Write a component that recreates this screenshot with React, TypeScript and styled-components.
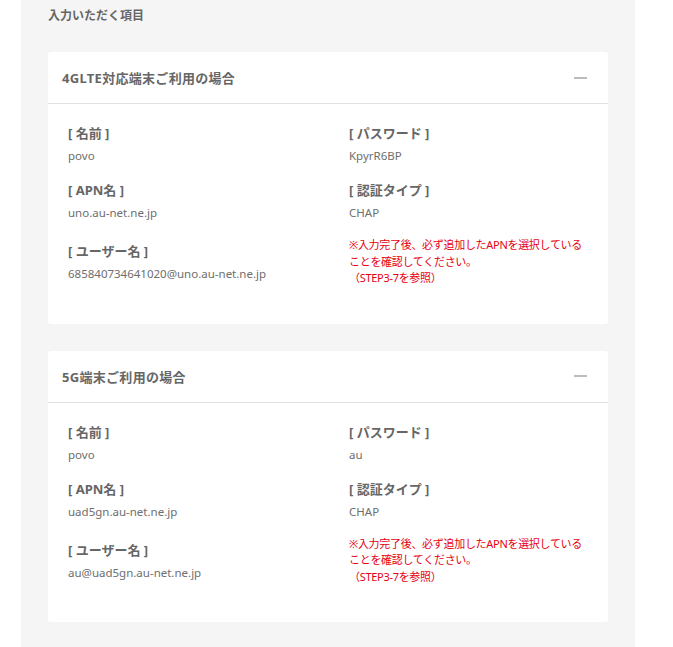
import React from "react";
import styled, { createGlobalStyle } from "styled-components";

const GlobalStyle = createGlobalStyle`
  html, body {
    margin: 0;
    padding: 0;
    background: #ffffff;
  }
  body {
    font-family: "Noto Sans", "Noto Sans CJK JP", sans-serif;
    color: #666666;
  }
`;

const Page = styled.div`
  padding: 0 38px 0 21px;
`;

const Panel = styled.section`
  background: #f5f5f5;
  padding: 7px 27px 40px 27px;
  min-height: 647px;
  box-sizing: border-box;
`;

const PanelTitle = styled.h2`
  margin: 0 0 27px 0;
  font-size: 12px;
  line-height: 18px;
  font-weight: 700;
  color: #666666;
`;

const CardList = styled.div`
  display: flex;
  flex-direction: column;
  gap: 27px;
`;

const Card = styled.article`
  background: #ffffff;
  border-radius: 3px;
`;

const CardHeader = styled.header`
  display: flex;
  align-items: center;
  justify-content: space-between;
  height: 51px;
  padding: 0 21px 0 14px;
  border-bottom: 1px solid #e2e2e2;
`;

const CardTitle = styled.h3`
  margin: 0;
  font-size: 13px;
  font-weight: 700;
  letter-spacing: 0.3px;
  color: #666666;
`;

const Minus = styled.span`
  display: block;
  width: 13px;
  height: 2px;
  background: #bcbcbc;
`;

const CardBody = styled.div`
  display: grid;
  grid-template-columns: 281px 1fr;
  padding: 19px 20px 37px 20px;
`;

const Column = styled.div`
  display: flex;
  flex-direction: column;
`;

const Field = styled.div<{ $top?: number }>`
  margin-top: ${(p) => (p.$top ?? 0)}px;
`;

const Label = styled.div`
  font-size: 13px;
  line-height: 20px;
  font-weight: 700;
  color: #666666;
  white-space: pre;
`;

const Value = styled.div`
  margin-top: 5px;
  font-size: 11.5px;
  line-height: 16px;
  color: #6e6e6e;
`;

const Note = styled.p<{ $top?: number }>`
  margin: ${(p) => (p.$top ?? 0)}px 0 0 0;
  font-size: 11px;
  line-height: 16.5px;
  color: #e60012;
  white-space: nowrap;
  letter-spacing: -0.3px;
`;

type Conf = {
  title: string;
  name: string;
  apn: string;
  user: string;
  password: string;
  auth: string;
};

const configs: Conf[] = [
  {
    title: "4GLTE対応端末ご利用の場合",
    name: "povo",
    apn: "uno.au-net.ne.jp",
    user: "685840734641020@uno.au-net.ne.jp",
    password: "KpyrR6BP",
    auth: "CHAP",
  },
  {
    title: "5G端末ご利用の場合",
    name: "povo",
    apn: "uad5gn.au-net.ne.jp",
    user: "au@uad5gn.au-net.ne.jp",
    password: "au",
    auth: "CHAP",
  },
];

function ApnCard({ c }: { c: Conf }) {
  return (
    <Card>
      <CardHeader>
        <CardTitle>{c.title}</CardTitle>
        <Minus />
      </CardHeader>
      <CardBody>
        <Column>
          <Field>
            <Label>[ 名前 ]</Label>
            <Value>{c.name}</Value>
          </Field>
          <Field $top={16}>
            <Label>[ APN名 ]</Label>
            <Value>{c.apn}</Value>
          </Field>
          <Field $top={20}>
            <Label>[ ユーザー名 ]</Label>
            <Value>{c.user}</Value>
          </Field>
        </Column>
        <Column>
          <Field>
            <Label>[ パスワード ]</Label>
            <Value>{c.password}</Value>
          </Field>
          <Field $top={16}>
            <Label>[ 認証タイプ ]</Label>
            <Value>{c.auth}</Value>
          </Field>
          <Note $top={16}>
            ※入力完了後、必ず追加したAPNを選択している
            <br />
            ことを確認してください。
            <br />
            （STEP3-7を参照）
          </Note>
        </Column>
      </CardBody>
    </Card>
  );
}

export default function App() {
  return (
    <>
      <GlobalStyle />
      <Page>
        <Panel>
          <PanelTitle>入力いただく項目</PanelTitle>
          <CardList>
            {configs.map((c) => (
              <ApnCard key={c.title} c={c} />
            ))}
          </CardList>
        </Panel>
      </Page>
    </>
  );
}
